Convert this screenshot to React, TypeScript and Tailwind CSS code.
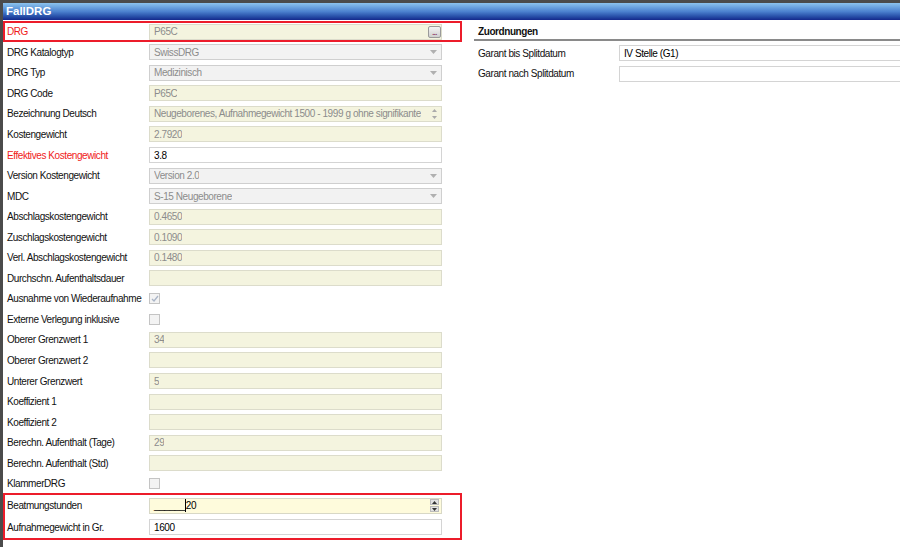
import { ReactNode } from "react";

type Field = {
  label: string;
  kind: "text" | "select" | "white" | "check" | "area";
  value?: string;
  checked?: boolean;
  red?: boolean;
};

const fields: Field[] = [
  { label: "DRG Katalogtyp", kind: "select", value: "SwissDRG" },
  { label: "DRG Typ", kind: "select", value: "Medizinisch" },
  { label: "DRG Code", kind: "text", value: "P65C" },
  {
    label: "Bezeichnung Deutsch",
    kind: "area",
    value: "Neugeborenes, Aufnahmegewicht 1500 - 1999 g ohne signifikante",
  },
  { label: "Kostengewicht", kind: "text", value: "2.7920" },
  { label: "Effektives Kostengewicht", kind: "white", value: "3.8", red: true },
  { label: "Version Kostengewicht", kind: "select", value: "Version 2.0" },
  { label: "MDC", kind: "select", value: "S-15 Neugeborene" },
  { label: "Abschlagskostengewicht", kind: "text", value: "0.4650" },
  { label: "Zuschlagskostengewicht", kind: "text", value: "0.1090" },
  { label: "Verl. Abschlagskostengewicht", kind: "text", value: "0.1480" },
  { label: "Durchschn. Aufenthaltsdauer", kind: "text", value: "" },
  { label: "Ausnahme von Wiederaufnahme", kind: "check", checked: true },
  { label: "Externe Verlegung inklusive", kind: "check" },
  { label: "Oberer Grenzwert 1", kind: "text", value: "34" },
  { label: "Oberer Grenzwert 2", kind: "text", value: "" },
  { label: "Unterer Grenzwert", kind: "text", value: "5" },
  { label: "Koeffizient 1", kind: "text", value: "" },
  { label: "Koeffizient 2", kind: "text", value: "" },
  { label: "Berechn. Aufenthalt (Tage)", kind: "text", value: "29" },
  { label: "Berechn. Aufenthalt (Std)", kind: "text", value: "" },
  { label: "KlammerDRG", kind: "check" },
];

const Arrow = () => (
  <svg width="7" height="4" viewBox="0 0 7 4" className="mr-[4px] shrink-0">
    <path d="M0 0h7L3.5 4z" fill="#b0b0b0" />
  </svg>
);

const Spin = ({ dark }: { dark?: boolean }) => (
  <div className="flex flex-col gap-[1px] mr-[2px] shrink-0">
    <div className={`w-[9px] h-[6px] flex items-center justify-center ${dark ? "bg-[#e2e2e2] border border-[#bbb]" : ""}`}>
      <svg width="5" height="3" viewBox="0 0 5 3">
        <path d="M0 3h5L2.5 0z" fill={dark ? "#333" : "#aaa"} />
      </svg>
    </div>
    <div className={`w-[9px] h-[6px] flex items-center justify-center ${dark ? "bg-[#e2e2e2] border border-[#bbb]" : ""}`}>
      <svg width="5" height="3" viewBox="0 0 5 3">
        <path d="M0 0h5L2.5 3z" fill={dark ? "#333" : "#aaa"} />
      </svg>
    </div>
  </div>
);

const Control = ({ f }: { f: Field }) => {
  if (f.kind === "check") {
    return (
      <div className="w-[11px] h-[11px] border border-[#c4c4c4] bg-[#f3f3f3] flex items-center justify-center">
        {f.checked ? (
          <svg width="8" height="7" viewBox="0 0 8 7">
            <path d="M1 4l2 2 4-5" stroke="#a9b4c6" strokeWidth="1.3" fill="none" />
          </svg>
        ) : null}
      </div>
    );
  }
  const box =
    f.kind === "select"
      ? "bg-[#f2f2f2] border-[#cfcfcf] text-[#8c8c8c]"
      : f.kind === "white"
        ? "bg-white border-[#d4d4d4] text-black"
        : "bg-[#f4f4df] border-[#dcdccb] text-[#8c8c8c]";
  return (
    <div className={`w-[293px] h-[16px] border flex items-center justify-between pl-[4px] ${box}`}>
      <span className="whitespace-nowrap overflow-hidden">{f.value}</span>
      {f.kind === "select" ? <Arrow /> : null}
      {f.kind === "area" ? <Spin /> : null}
    </div>
  );
};

const Row = ({ label, red, children, h = "h-[20.55px]", pl = "pl-[4px]" }: { label: string; red?: boolean; children: ReactNode; h?: string; pl?: string }) => (
  <div className={`flex items-center ${h} ${pl}`}>
    <div className={`w-[142px] shrink-0 whitespace-nowrap ${red ? "text-[#f01a1a]" : "text-[#111]"}`}>{label}</div>
    {children}
  </div>
);

export default function App() {
  return (
    <div
      className="w-[900px] h-[547px] overflow-hidden bg-white border-l-[3px] border-t-[3px] border-[#4b4b4b] flex flex-col text-[10px] tracking-[-0.42px]"
      style={{ fontFamily: '"Liberation Sans", Arial, sans-serif' }}
    >
      <div className="h-[17px] shrink-0 bg-gradient-to-b from-[#8cc3ee] via-[#4c82cf] to-[#15288c] flex items-center pl-[3px]">
        <span className="text-white font-bold text-[11.5px] tracking-[0px]">FallDRG</span>
      </div>
      <div className="flex flex-1">
        <div className="w-[459px] shrink-0 pt-[1px]">
          <div className="border-2 border-[#ec1c2a]">
            <Row label="DRG" red h="h-[17px]" pl="pl-[2px]">
              <div className="w-[293px] h-[16px] border border-[#dcdccb] bg-[#f4f4df] text-[#8c8c8c] flex items-center justify-between pl-[4px]">
                <span>P65C</span>
                <div className="w-[13px] h-[12px] rounded-[2px] border border-[#9a9a9a] bg-gradient-to-b from-[#f4f4f4] to-[#cfcfcf] flex items-end justify-center pb-[2px]">
                  <span className="text-[#8a3060] text-[7px] leading-[5px] font-bold">...</span>
                </div>
              </div>
            </Row>
          </div>
          {fields.map((f) => (
            <Row key={f.label} label={f.label} red={f.red}>
              <Control f={f} />
            </Row>
          ))}
          <div className="border-2 border-[#ec1c2a] mt-[-1px]">
            <Row label="Beatmungstunden" h="h-[21.5px]" pl="pl-[2px]">
              <div className="w-[293px] h-[16px] border border-[#d8d8c6] bg-[#fefbdc] text-black flex items-center justify-between pl-[4px]">
                <span className="flex items-center">
                  <span>______</span>
                  <span className="w-[1px] h-[13px] bg-black" />
                  <span>20</span>
                </span>
                <Spin dark />
              </div>
            </Row>
            <Row label="Aufnahmegewicht in Gr." h="h-[21.5px]" pl="pl-[2px]">
              <div className="w-[293px] h-[16px] border border-[#d4d4d4] bg-white text-black flex items-center pl-[4px]">
                1600
              </div>
            </Row>
          </div>
        </div>
        <div className="flex-1 pl-[12px] pt-[3px]">
          <div className="h-[18px] flex items-center pl-[4px] font-bold text-[#111] border-b-2 border-[#8a8a8a]">
            Zuordnungen
          </div>
          <div className="pt-[2px]">
            <div className="flex items-center h-[20.5px] pl-[4px]">
              <div className="w-[141px] shrink-0 text-[#111]">Garant bis Splitdatum</div>
              <div className="flex-1 h-[16px] border border-[#d4d4d4] border-r-0 bg-white text-black flex items-center pl-[4px]">
                IV Stelle (G1)
              </div>
            </div>
            <div className="flex items-center h-[20.5px] pl-[4px]">
              <div className="w-[141px] shrink-0 text-[#111]">Garant nach Splitdatum</div>
              <div className="flex-1 h-[16px] border border-[#d4d4d4] border-r-0 bg-white" />
            </div>
          </div>
        </div>
      </div>
    </div>
  );
}
